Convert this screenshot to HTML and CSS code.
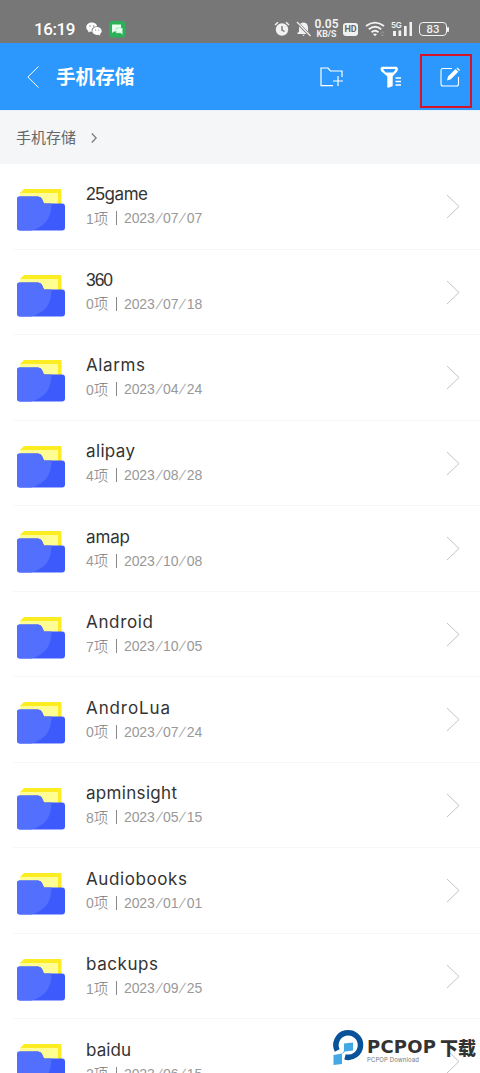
FILE: index.html
```html
<!DOCTYPE html>
<html lang="zh-CN">
<head>
<meta charset="utf-8">
<title>手机存储</title>
<link rel="stylesheet" href="styles.css">
</head>
<body>
<svg class="defs" width="0" height="0">
  <symbol id="folder" viewBox="0 0 48 42">
    <path d="M7 0H44.5V30H7V4H3L7 0Z" fill="#fbed22"/>
    <path d="M3 4H41V30H3Z" fill="#fffd93"/>
    <path d="M0 10Q0 7.500 2.500 7.500H21Q24 7.500 25 10L27 14.500H45Q48 14.500 48 17.500V38.500Q48 41.500 45 41.500H3Q0 41.500 0 38.500Z" fill="#3d5bfd"/>
    <path d="M0 10Q0 7.500 2.500 7.500H21Q24 7.500 25 10L27 14.500H34.500C34.500 29 28 38 14 41.500H3Q0 41.500 0 38.500Z" fill="#5270fd"/>
  </symbol>
</svg>
<div class="screen">
  <header class="status">
    <span class="clock">16:19</span>
    <svg class="wechat" viewBox="0 0 16 14" width="16" height="14" fill="#fff"><path d="M6 .5C2.800.5.300 2.500.300 5.200c0 1.600.8 2.800 2.100 3.700l-.5 1.700 2-1 1.700.3C5.300 6.500 7.500 4.400 11.300 4.300 10.700 2 8.600.5 6 .5Z"/><path d="M11 5C8.300 5 6.300 6.800 6.300 9S8.300 12.900 11 12.900l1.500-.2 1.800 1-.4-1.500C15 11.400 15.700 10.300 15.700 9c0-2.200-2-4-4.700-4Z"/><g fill="#777"><circle cx="4" cy="4" r=".7"/><circle cx="7.700" cy="4" r=".7"/><circle cx="9.500" cy="8" r=".6"/><circle cx="12.600" cy="8" r=".6"/></g></svg>
    <svg class="message" viewBox="0 0 17 17" width="17" height="17"><rect width="16.500" height="16.500" rx="3.500" fill="#2bb158"/><path d="M3 3.500h9v7H5l-2 1.500Z" fill="#e8fff0"/><path d="M7 7h6.500v6.500L11.500 12H7Z" fill="#e8fff0" stroke="#72ce91" stroke-width=".5"/></svg>
    <div class="status-right">
      <svg class="alarm" viewBox="0 0 16 16" width="16" height="16"><circle cx="8" cy="8.500" r="6.200" fill="#fff"/><path d="M1 4 4 1.200M12 1.200 15 4" stroke="#fff" stroke-width="1.500"/><path d="M8 5v4l2.500 1.500" fill="none" stroke="#777" stroke-width="1.400"/></svg>
      <svg class="bell" viewBox="0 0 15 16" width="15" height="16"><path d="M7.500 1.500C4 1.500 3 4.500 3 7v3.500L1.500 12v1h12v-1L12 10.500V7c0-2.500-1-5.500-4.500-5.500ZM6 13.800h3L7.500 15Z" fill="#fff"/><path d="m1 1.500 13 13" stroke="#777" stroke-width="2.600"/><path d="m1 1 13.500 14" stroke="#fff" stroke-width="1.200"/></svg>
      <div class="speed"><b>0.05</b><small>KB/S</small></div>
      <span class="hd">HD</span>
      <svg class="wifi" viewBox="0 0 20 16" width="20" height="16" fill="none" stroke="#fff" stroke-width="1.900"><path d="M1 5Q10-1.800 19 5M3.800 8.200Q10 3.200 16.200 8.200M6.500 11.200Q10 8.500 13.500 11.200"/><path d="m7.900 13 2.100 2.200 2.100-2.200Q10 11.800 7.900 13Z" fill="#fff" stroke="none"/><path d="m16 12.200 1.500-1.700 1.500 1.700M16 13.300l1.500 1.700 1.500-1.700" stroke="#aaa" stroke-width=".8"/></svg>
      <div class="signal"><span>5G</span><svg viewBox="0 0 22 16" width="22" height="16" fill="#fff"><path d="M2 10h3v5H2ZM7.500 9.500h2.700v5.500H7.500ZM13 5h2.700v10H13ZM18.500 1H21v14h-2.500Z"/></svg></div>
      <span class="battery">83</span>
    </div>
  </header>
  <nav class="toolbar">
    <svg class="back" viewBox="0 0 12 22" width="12" height="22"><path d="M11.500.5.800 11l10.700 10.500" fill="none" stroke="#fff" stroke-width="1"/></svg>
    <h1>手机存储</h1>
    <svg class="new-folder" viewBox="0 0 24 20" width="24" height="20" fill="none" stroke="#fff" stroke-width="1.200"><path d="M13 18.600H1V1H8l2.500 3H22v6M18 9v10M13 14h10"/></svg>
    <svg class="filter" viewBox="0 0 22 22" width="22" height="22"><path d="M2 1.500H16.500Q18 3 16.500 5L12 10v9.500l-4 1.500V10L2 5Q.5 3 2 1.500Z" fill="#fff" stroke="#fff" stroke-width="1.400" stroke-linejoin="round"/><path d="M3.500 3h11.800v1l-2.200 2.400H5.800L3.500 4Z" fill="#2c98fd"/><path d="M15.500 12H21M15.500 15.500H21M15.500 19H21" stroke="#fff" stroke-width="1.300"/></svg>
    <div class="edit"><svg viewBox="0 0 20 20" width="20" height="20"><path d="M12 1.500H3Q1 1.500 1 3.500V17Q1 19 3 19H16.500Q18.500 19 18.500 17V10" fill="none" stroke="#fff" stroke-width="1.100"/><path d="m7 13.500 1-4L15.500 2l2.800 2.800L10.800 12.300ZM16.400 1.300l1-.9 2.600 2.500-.9 1Z" fill="#fff"/></svg></div>
  </nav>
  <div class="crumb"><span>手机存储</span><svg viewBox="0 0 6 10" width="6" height="10"><path d="m.8.500 4.400 4.500L.8 9.500" fill="none" stroke="#777" stroke-width="1.200"/></svg></div>
  <main class="list" id="list"></main>
  <div class="brand">
    <svg viewBox="0 0 32 36" width="32" height="36"><path d="M4.200 21.500A12.300 12.300 0 1 1 12 27.900" fill="none" stroke="#075298" stroke-width="5.500"/><path d="M11 14.500 20 13.500V21.500L12 22.500 9 25V35L.5 36V26L9 24.500 11 22Z" fill="#43a8e4"/></svg>
    <div class="brand-text"><div class="brand-name"><span>PCPOP</span><b>下载</b></div><small>PCPOP Download</small></div>
  </div>
</div>
<script src="app.js"></script>
</body>
</html>
```
FILE: styles.css
```css
* { box-sizing: border-box; }
body { margin: 0; font-family: Roboto, "Noto Sans CJK SC", sans-serif; background: #fff; }
.defs { position: absolute; }
.screen { width: 480px; height: 1073px; overflow: hidden; position: relative; }
svg { display: block; flex: none; }
.status { height: 43px; background: #777; color: #fff; display: flex; align-items: flex-start; padding: 21px 30px 0 34px; }
.clock { font-size: 17px; line-height: 17px; font-weight: 500; width: 52px; letter-spacing: -.4px; }
.wechat { margin-top: 1px; }
.message { margin-left: 7px; }
.status-right { display: flex; margin-left: auto; margin-right: 3px; opacity: .9; }
.bell { margin-left: 6px; }
.speed { margin-left: 4px; width: 23px; display: flex; flex-direction: column; font-family: Roboto, sans-serif; align-items: center; margin-top: -2px; }
.speed b { font-size: 12px; line-height: 11px; font-weight: 600; }
.speed small { font-size: 8.800px; line-height: 8px; font-weight: 700; }
.hd { width: 15px; height: 13px; margin: 2px 0 0 5px; border-radius: 3px; background: #fff; color: #666; font: bold 9px/13px Roboto, sans-serif; text-align: center; }
.wifi { margin-left: 7px; }
.signal { width: 22px; margin-left: 6px; position: relative; }
.signal span { position: absolute; top: 0; left: 0; font: 600 8px/8px Inter, sans-serif; letter-spacing: -.3px; }
.battery { position: relative; margin: 1px 0 0 6px; width: 28px; height: 14px; border: 1px solid #fff; border-radius: 4px; font: 600 10px/12px Inter, sans-serif; text-align: center; }
.battery::after { content: ""; position: absolute; right: -3px; top: 4px; width: 2px; height: 5px; background: #fff; border-radius: 1px; }
.toolbar { height: 67px; background: #2c98fd; display: flex; align-items: center; padding: 0 9px 0 27px; }
.toolbar h1 { margin: -1px 0 0 17px; font: 700 19.600px/24px "Noto Sans CJK SC", sans-serif; color: #fff; width: 264px; flex: none; }
.new-folder { margin-right: 36px; }
.filter { margin-right: 18px; }
.edit { flex: none; width: 52px; height: 54px; margin-top: 8px; border: 2px solid #d5142a; padding: 11px 0 0 18px; }
.crumb { height: 54px; background: #f5f6f8; border-top: 1px solid #e5f2fd; display: flex; align-items: center; gap: 15px; padding-left: 16px; font: 15px/20px "Noto Sans CJK SC", sans-serif; color: #666; }
.crumb span { margin-top: -1px; }
.list { display: flex; flex-direction: column; }
.row { height: 85.550px; flex: none; display: flex; padding: 0 20px 0 17px; position: relative; align-items: flex-start; }
.row::after { content: ""; position: absolute; left: 13px; right: 0; bottom: 0; height: 1px; background: #f7f7f7; }
.row .icon { margin-top: 25px; }
.row .arrow { margin: 30px 0 0 auto; }
.info { margin: 19.400px 0 0 21px; white-space: nowrap; }
.name { font: 17px/23px Inter, sans-serif; color: #333; width: max-content; }
.name .digits { font-family: "Liberation Sans", sans-serif; font-size: 17.500px; }
.meta { display: flex; align-items: center; margin-top: 2px; height: 20px; font: 14px/20px "Liberation Sans", "Noto Sans CJK SC", sans-serif; color: #999; }
.count { width: 30px; }
.count span { font: 300 14.500px/20px "Noto Sans CJK SC", sans-serif; color: #777; }
.date { display: flex; letter-spacing: -.15px; }
.slash { width: 8.500px; text-align: center; color: #aaa; transform: skewX(-20deg); }
.divider { width: 1px; height: 14px; background: #888; margin-right: 7px; }
.brand { position: absolute; left: 333px; top: 1029px; display: flex; }
.brand-text { width: 114px; margin-left: 2px; padding-top: 7px; }
.brand-name { display: flex; align-items: center; height: 22px; color: #333; }
.brand-name span { font: 700 18px/22px "DejaVu Sans", sans-serif; letter-spacing: .2px; width: 73px; }
.brand-name b { font: 900 18px/22px "Noto Sans CJK SC", sans-serif; }
.brand small { display: block; font: 6px/7px Inter, sans-serif; letter-spacing: .1px; color: #777; margin-top: -2px; }
```
FILE: app.js
```js
const folders = [
  ["25game", 1, "2023/07/07", 62],
  ["360", 0, "2023/07/18", 27],
  ["Alarms", 0, "2023/04/24", 59],
  ["alipay", 4, "2023/08/28", 49],
  ["amap", 4, "2023/10/08", 44],
  ["Android", 7, "2023/10/05", 67],
  ["AndroLua", 0, "2023/07/24", 84],
  ["apminsight", 8, "2023/05/15", 91],
  ["Audiobooks", 0, "2023/01/01", 101],
  ["backups", 1, "2023/09/25", 72],
  ["baidu", 2, "2023/06/15", 45]
];
document.getElementById("list").innerHTML = folders.map(([name, count, date]) => `
  <div class="row">
    <svg class="icon" width="48" height="42"><use href="#folder"/></svg>
    <div class="info"><div class="name">${name.replace(/\d+/, '<span class="digits">$&</span>')}</div>
      <div class="meta"><span class="count">${count}<span>项</span></span><i class="divider"></i><span class="date">${date.split("/").join('<span class="slash">/</span>')}</span></div>
    </div>
    <svg class="arrow" viewBox="0 0 14 25" width="14" height="25"><path d="M1 1 13 12.500 1 24" fill="none" stroke="#c4c4c4" stroke-width="1"/></svg>
  </div>`).join("");
document.querySelectorAll(".name").forEach((el, i) => {
  const natural = el.getBoundingClientRect().width;
  el.style.letterSpacing = (folders[i][3] - natural) / (folders[i][0].length - 1) + "px";
});
```
